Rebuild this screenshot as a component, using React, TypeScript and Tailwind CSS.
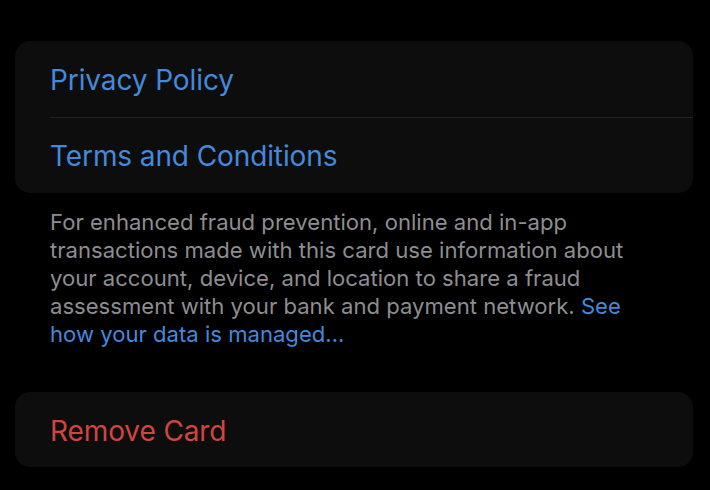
import type { FC } from "react";

const font = { fontFamily: "Inter, 'Noto Sans', sans-serif" };

const App: FC = () => (
  <div className="min-h-[490px] w-[710px] bg-black pl-[15px] pr-[17px] pt-[41px] antialiased" style={font}>
    {/* links group */}
    <div className="overflow-hidden rounded-[15px] bg-[#0d0d0d]">
      <div className="flex h-[76px] items-center pl-[35px] pt-[2px] text-[28px] tracking-[-0.1px] text-[#4389dc]">
        Privacy Policy
      </div>
      <div className="ml-[35px] h-px bg-[#222222]" />
      <div className="flex h-[75px] items-center pl-[35px] text-[28px] tracking-[-0.1px] text-[#4389dc]">
        Terms and Conditions
      </div>
    </div>

    <p className="mt-[15px] w-[650px] pl-[35px] pr-[6px] text-[22.1px] leading-[28px] text-[#8d8d92]">
      For enhanced fraud prevention, online and in-app transactions made with this card use information about
      your account, device, and location to share a fraud assessment with your bank and payment network.{" "}
      <span className="text-[#4389dc]">See how your data is managed...</span>
    </p>

    <div className="mt-[44px] flex h-[75px] items-center rounded-[15px] bg-[#0d0d0d] pl-[35px] pt-[2px] text-[28px] tracking-[-0.1px] text-[#cf4540]">
      Remove Card
    </div>
  </div>
);

export default App;
